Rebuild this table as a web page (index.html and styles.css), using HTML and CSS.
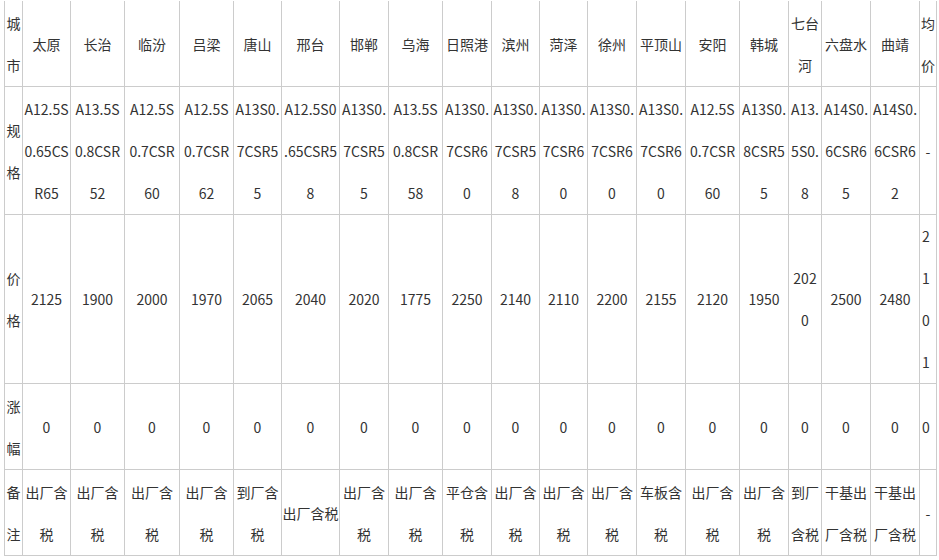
FILE: index.html
```html
<!DOCTYPE html>
<html lang="zh-CN">
<head>
<meta charset="utf-8">
<title>价格表</title>
<link rel="stylesheet" href="styles.css">
</head>
<body>
<table class="price-table">
  <colgroup>
    <col class="w18"><col class="w48"><col class="w54"><col class="w55"><col class="w54">
    <col class="w48"><col class="w58"><col class="w49"><col class="w54"><col class="w49">
    <col class="w48"><col class="w48"><col class="w49"><col class="w49"><col class="w54">
    <col class="w49"><col class="w33"><col class="w49"><col class="w49"><col class="w17">
  </colgroup>
  <tbody>
    <tr>
      <td>城<br>市</td><td>太原</td><td>长治</td><td>临汾</td><td>吕梁</td><td>唐山</td><td>邢台</td><td>邯郸</td><td>乌海</td><td>日照港</td><td>滨州</td><td>菏泽</td><td>徐州</td><td>平顶山</td><td>安阳</td><td>韩城</td><td>七台<br>河</td><td>六盘水</td><td>曲靖</td><td>均<br>价</td>
    </tr>
    <tr>
      <td>规<br>格</td>
      <td>A12.5S<br>0.65CS<br>R65</td>
      <td>A13.5S<br>0.8CSR<br>52</td>
      <td>A12.5S<br>0.7CSR<br>60</td>
      <td>A12.5S<br>0.7CSR<br>62</td>
      <td>A13S0.<br>7CSR5<br>5</td>
      <td>A12.5S0<br>.65CSR5<br>8</td>
      <td>A13S0.<br>7CSR5<br>5</td>
      <td>A13.5S<br>0.8CSR<br>58</td>
      <td>A13S0.<br>7CSR6<br>0</td>
      <td>A13S0.<br>7CSR5<br>8</td>
      <td>A13S0.<br>7CSR6<br>0</td>
      <td>A13S0.<br>7CSR6<br>0</td>
      <td>A13S0.<br>7CSR6<br>0</td>
      <td>A12.5S<br>0.7CSR<br>60</td>
      <td>A13S0.<br>8CSR5<br>5</td>
      <td>A13.<br>5S0.<br>8</td>
      <td>A14S0.<br>6CSR6<br>5</td>
      <td>A14S0.<br>6CSR6<br>2</td>
      <td>-</td>
    </tr>
    <tr class="price-row">
      <td>价<br>格</td><td>2125</td><td>1900</td><td>2000</td><td>1970</td><td>2065</td><td>2040</td><td>2020</td><td>1775</td><td>2250</td><td>2140</td><td>2110</td><td>2200</td><td>2155</td><td>2120</td><td>1950</td><td>202<br>0</td><td>2500</td><td>2480</td><td class="edge">2<br>1<br>0<br>1</td>
    </tr>
    <tr>
      <td>涨<br>幅</td><td>0</td><td>0</td><td>0</td><td>0</td><td>0</td><td>0</td><td>0</td><td>0</td><td>0</td><td>0</td><td>0</td><td>0</td><td>0</td><td>0</td><td>0</td><td>0</td><td>0</td><td>0</td><td class="edge">0</td>
    </tr>
    <tr>
      <td>备<br>注</td>
      <td>出厂含<br>税</td>
      <td>出厂含<br>税</td>
      <td>出厂含<br>税</td>
      <td>出厂含<br>税</td>
      <td>到厂含<br>税</td>
      <td>出厂含税</td>
      <td>出厂含<br>税</td>
      <td>出厂含<br>税</td>
      <td>平仓含<br>税</td>
      <td>出厂含<br>税</td>
      <td>出厂含<br>税</td>
      <td>出厂含<br>税</td>
      <td>车板含<br>税</td>
      <td>出厂含<br>税</td>
      <td>出厂含<br>税</td>
      <td>到厂<br>含税</td>
      <td>干基出<br>厂含税</td>
      <td>干基出<br>厂含税</td>
      <td>-</td>
    </tr>
  </tbody>
</table>
</body>
</html>
```

FILE: styles.css
```css
html, body {
  margin: 0;
  padding: 0;
  background: #fff;
}

body {
  padding: 1px 0 0 4px;
  font-family: "Noto Sans CJK SC", "Noto Sans", sans-serif;
  font-size: 14px;
  color: #333;
}

.price-table {
  border-collapse: collapse;
  table-layout: fixed;
  width: 932px;
  border-top: none;
}

.price-table td {
  border: 1px solid #ccc;
  padding: 1px 0 0 0;
  line-height: 42px;
  text-align: center;
  vertical-align: middle;
  white-space: nowrap;
  overflow: hidden;
}

.price-table tr:first-child td {
  border-top: none;
}

.price-table .price-row td {
  padding-top: 0;
}

.price-table td.edge {
  text-align: left;
  padding-left: 2px;
}

.w17 { width: 17px; }
.w18 { width: 18px; }
.w33 { width: 33px; }
.w48 { width: 48px; }
.w49 { width: 49px; }
.w54 { width: 54px; }
.w55 { width: 55px; }
.w58 { width: 58px; }
```
